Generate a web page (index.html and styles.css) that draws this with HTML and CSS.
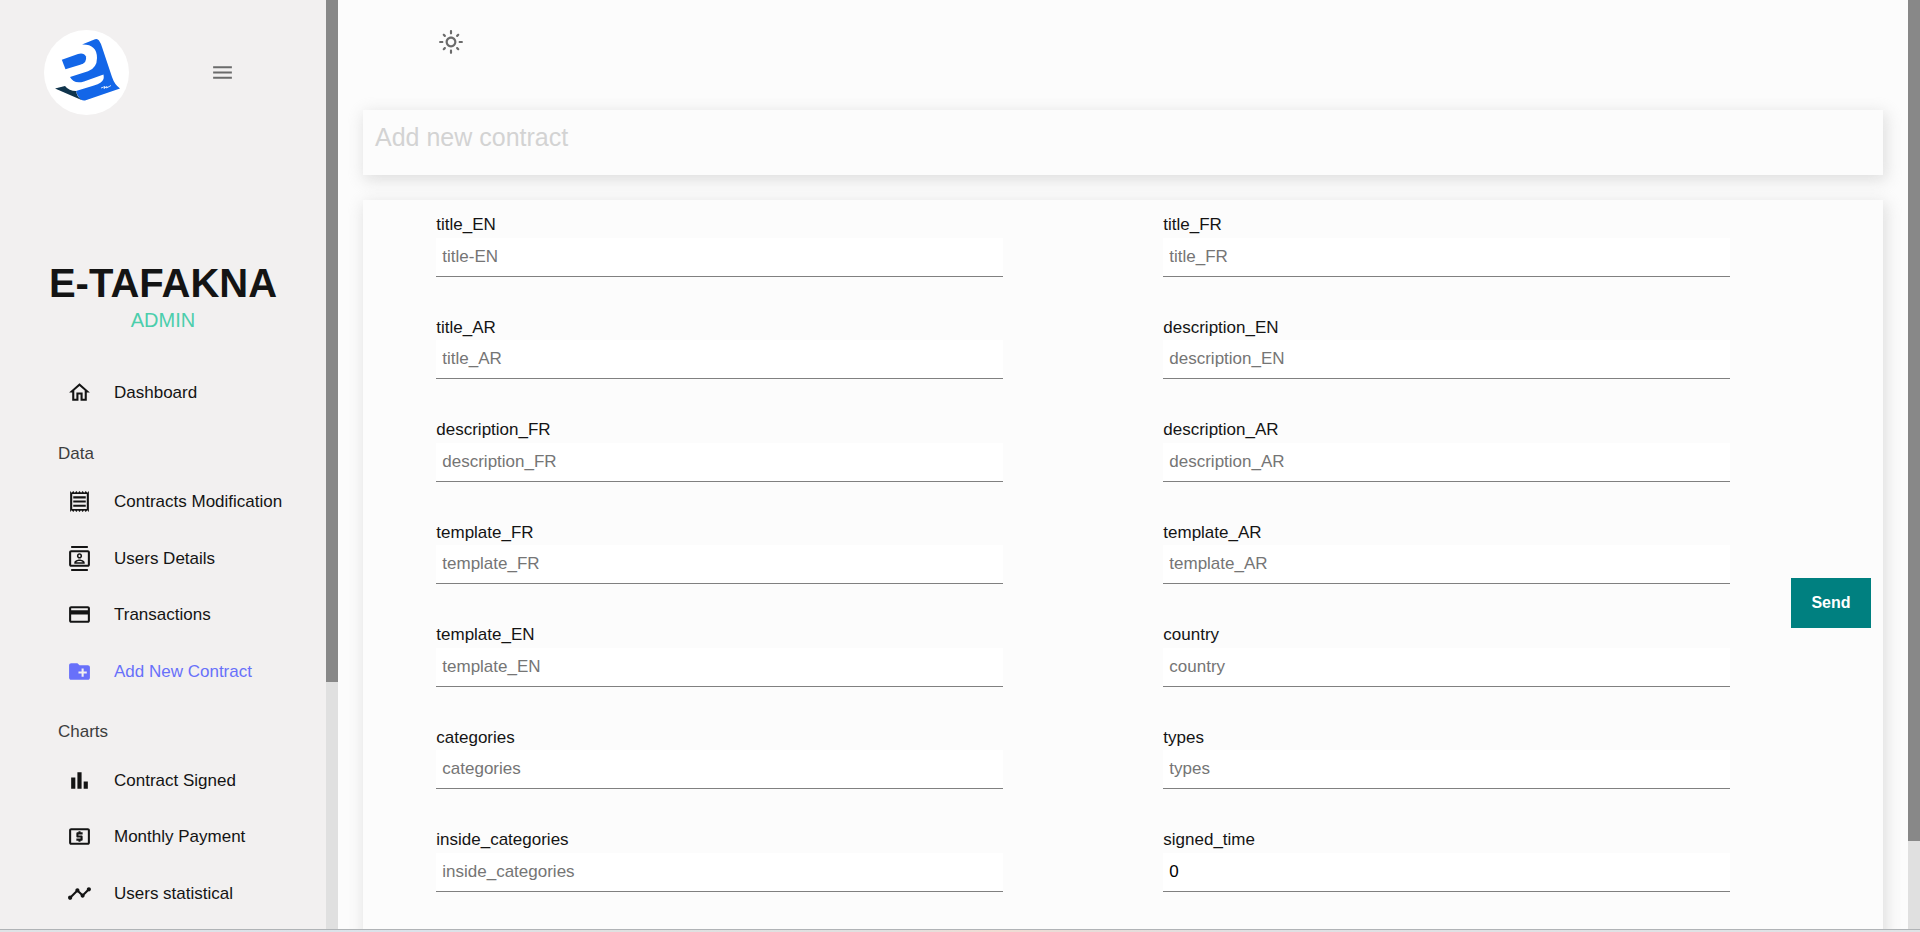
FILE: index.html
```html
<!DOCTYPE html>
<html lang="en">
<head>
<meta charset="utf-8">
<title>E-Tafakna Admin</title>
<link rel="stylesheet" href="styles.css">
</head>
<body>
<div class="app">
  <aside class="sidebar">
    <div class="brand-row">
      <svg class="logo" viewBox="0 0 85 85" role="img" aria-label="E-Tafakna logo">
        <circle cx="42.5" cy="42.5" r="42.5" fill="#fff"/>
        <path fill="#1366e8" d="M38 14.500L51 9.200Q53.500 8.200 55 10.500Q57 13.500 58 17L68 47Q70.500 54.500 76 58.500L41 70.500Q37 71 35 67.500Q32.500 64 32 61L50 55.500Q58 53 59.500 49Q60 47 59.500 44.500L40 51.500Q30 54.500 26 47L44 41.300Q53 38 53 28Q53 14 38 14.500Z"/>
        <path fill="#1366e8" d="M17.800 29.800L34 24Q40 22.500 42 26.500Q43 32.500 37 34.500L21.500 39.200Z"/>
        <path fill="#10344c" d="M11 58.500L21 56Q25 61 32 61Q32.500 66 37.500 70Z"/>
        <path fill="none" stroke="#fff" stroke-width="0.800" d="M57 58L61 56.500L60 58.500L63 56.500L62.500 58L67 55.500"/>
      </svg>
      <button class="icon-button" type="button" aria-label="Toggle menu">
        <svg class="icon" viewBox="0 0 24 24"><path d="M3 18h18v-2H3v2zm0-5h18v-2H3v2zm0-7v2h18V6H3z"/></svg>
      </button>
    </div>
    <h1 class="brand">E-TAFAKNA</h1>
    <p class="role">ADMIN</p>
    <nav class="nav">
      <a class="nav-item" href="#"><svg class="icon" viewBox="0 0 24 24"><path d="m12 5.690 5 4.500V18h-2v-6H9v6H7v-7.810l5-4.500M12 3 2 12h3v8h6v-6h2v6h6v-8h3L12 3z"/></svg>Dashboard</a>
      <h2 class="nav-heading">Data</h2>
      <a class="nav-item" href="#"><svg class="icon" viewBox="0 0 24 24"><path d="M19.500 3.500 18 2l-1.500 1.500L15 2l-1.500 1.500L12 2l-1.500 1.500L9 2 7.500 3.500 6 2 4.500 3.500 3 2v20l1.500-1.500L6 22l1.500-1.500L9 22l1.500-1.500L12 22l1.500-1.500L15 22l1.500-1.500L18 22l1.500-1.500L21 22V2l-1.500 1.500zM19 19.090H5V4.910h14v14.180zM6 15h12v2H6zm0-4h12v2H6zm0-4h12v2H6z"/></svg>Contracts Modification</a>
      <a class="nav-item" href="#"><svg class="icon" viewBox="0 0 24 24"><path d="M20 4H4c-1.100 0-2 .9-2 2v12c0 1.100.9 2 2 2h16c1.100 0 2-.9 2-2V6c0-1.100-.9-2-2-2zm0 14H4V6h16v12zM4 0h16v2H4zm0 22h16v2H4zm8-10c1.380 0 2.500-1.120 2.500-2.500S13.380 7 12 7 9.500 8.120 9.500 9.500 10.620 12 12 12zm0-3.500c.55 0 1 .45 1 1s-.45 1-1 1-1-.45-1-1 .45-1 1-1zm5 7.490C17 13.900 13.690 13 12 13s-5 .9-5 2.990V17h10v-1.010zm-8.190-.49c.61-.52 2.030-1 3.190-1 1.170 0 2.590.48 3.200 1H8.810z"/></svg>Users Details</a>
      <a class="nav-item" href="#"><svg class="icon" viewBox="0 0 24 24"><path d="M20 4H4c-1.110 0-1.990.89-1.990 2L2 18c0 1.110.89 2 2 2h16c1.110 0 2-.89 2-2V6c0-1.110-.89-2-2-2zm0 14H4v-6h16v6zm0-10H4V6h16v2z"/></svg>Transactions</a>
      <a class="nav-item nav-item-active" href="#" aria-current="page"><svg class="icon" viewBox="0 0 24 24"><path d="M20 6h-8l-2-2H4c-1.110 0-1.990.89-1.990 2L2 18c0 1.110.89 2 2 2h16c1.110 0 2-.89 2-2V8c0-1.110-.89-2-2-2zm-1 8h-3v3h-2v-3h-3v-2h3V9h2v3h3v2z"/></svg>Add New Contract</a>
      <h2 class="nav-heading">Charts</h2>
      <a class="nav-item" href="#"><svg class="icon" viewBox="0 0 24 24"><path d="M4 9h4v11H4zm12 4h4v7h-4zm-6-9h4v16h-4z"/></svg>Contract Signed</a>
      <a class="nav-item" href="#"><svg class="icon" viewBox="0 0 24 24"><path d="M11 17h2v-1h1c.55 0 1-.45 1-1v-3c0-.55-.45-1-1-1h-3v-1h4V8h-2V7h-2v1h-1c-.55 0-1 .45-1 1v3c0 .55.45 1 1 1h3v1H9v2h2v1zm9-13H4c-1.110 0-1.990.89-1.990 2L2 18c0 1.110.89 2 2 2h16c1.110 0 2-.89 2-2V6c0-1.110-.89-2-2-2zm0 14H4V6h16v12z"/></svg>Monthly Payment</a>
      <a class="nav-item" href="#"><svg class="icon" viewBox="0 0 24 24"><path d="M23 8c0 1.100-.9 2-2 2-.18 0-.35-.02-.51-.07l-3.560 3.550c.05.16.07.34.07.52 0 1.100-.9 2-2 2s-2-.9-2-2c0-.18.02-.36.07-.52l-2.550-2.550c-.16.05-.34.07-.52.07s-.36-.02-.52-.07l-4.550 4.560c.05.16.07.33.07.51 0 1.100-.9 2-2 2s-2-.9-2-2 .9-2 2-2c.18 0 .35.02.51.07l4.560-4.550C8.020 9.360 8 9.180 8 9c0-1.100.9-2 2-2s2 .9 2 2c0 .18-.02.36-.07.52l2.550 2.550c.16-.05.34-.07.52-.07s.36.02.52.07l3.550-3.560C19.020 8.350 19 8.180 19 8c0-1.100.9-2 2-2s2 .9 2 2z"/></svg>Users statistical</a>
    </nav>
  </aside>
  <div class="scrollbar" aria-hidden="true"><div class="thumb thumb-side"></div></div>
  <main class="main">
    <header class="topbar">
      <button class="icon-button" type="button" aria-label="Toggle colour mode">
        <svg class="icon icon-sun" viewBox="0 0 24 24"><path d="M12 9c1.650 0 3 1.350 3 3s-1.350 3-3 3-3-1.350-3-3 1.350-3 3-3m0-2c-2.760 0-5 2.240-5 5s2.240 5 5 5 5-2.240 5-5-2.240-5-5-5zM2 13h2c.55 0 1-.45 1-1s-.45-1-1-1H2c-.55 0-1 .45-1 1s.45 1 1 1zm18 0h2c.55 0 1-.45 1-1s-.45-1-1-1h-2c-.55 0-1 .45-1 1s.45 1 1 1zM11 2v2c0 .55.45 1 1 1s1-.45 1-1V2c0-.55-.45-1-1-1s-1 .45-1 1zm0 18v2c0 .55.45 1 1 1s1-.45 1-1v-2c0-.55-.45-1-1-1s-1 .45-1 1zM5.990 4.580c-.39-.39-1.030-.39-1.410 0-.39.39-.39 1.030 0 1.410l1.060 1.060c.39.39 1.030.39 1.410 0s.39-1.030 0-1.410L5.990 4.580zm12.370 12.370c-.39-.39-1.030-.39-1.410 0-.39.39-.39 1.030 0 1.410l1.060 1.060c.39.39 1.030.39 1.410 0 .39-.39.39-1.030 0-1.410l-1.060-1.060zm1.060-10.960c.39-.39.39-1.030 0-1.410-.39-.39-1.030-.39-1.410 0l-1.060 1.060c-.39.39-.39 1.030 0 1.410s1.030.39 1.410 0l1.060-1.060zM7.050 18.360c.39-.39.39-1.030 0-1.410-.39-.39-1.030-.39-1.410 0l-1.060 1.060c-.39.39-.39 1.030 0 1.410s1.030.39 1.410 0l1.060-1.060z"/></svg>
      </button>
    </header>
    <h2 class="card title-card">Add new contract</h2>
    <form class="card form-card">
      <div class="fields">
        <div class="field"><label for="title-en">title_EN</label><input id="title-en" type="text" placeholder="title-EN"></div>
        <div class="field"><label for="title-fr">title_FR</label><input id="title-fr" type="text" placeholder="title_FR"></div>
        <div class="field"><label for="title-ar">title_AR</label><input id="title-ar" type="text" placeholder="title_AR"></div>
        <div class="field"><label for="description-en">description_EN</label><input id="description-en" type="text" placeholder="description_EN"></div>
        <div class="field"><label for="description-fr">description_FR</label><input id="description-fr" type="text" placeholder="description_FR"></div>
        <div class="field"><label for="description-ar">description_AR</label><input id="description-ar" type="text" placeholder="description_AR"></div>
        <div class="field"><label for="template-fr">template_FR</label><input id="template-fr" type="text" placeholder="template_FR"></div>
        <div class="field"><label for="template-ar">template_AR</label><input id="template-ar" type="text" placeholder="template_AR"></div>
        <div class="field"><label for="template-en">template_EN</label><input id="template-en" type="text" placeholder="template_EN"></div>
        <div class="field"><label for="country">country</label><input id="country" type="text" placeholder="country"></div>
        <div class="field"><label for="categories">categories</label><input id="categories" type="text" placeholder="categories"></div>
        <div class="field"><label for="types">types</label><input id="types" type="text" placeholder="types"></div>
        <div class="field"><label for="inside-categories">inside_categories</label><input id="inside-categories" type="text" placeholder="inside_categories"></div>
        <div class="field"><label for="signed-time">signed_time</label><input id="signed-time" type="text" value="0"></div>
      </div>
      <button class="send" type="submit">Send</button>
    </form>
  </main>
  <div class="scrollbar" aria-hidden="true"><div class="thumb thumb-main"></div></div>
</div>
<div class="bottom-edge" aria-hidden="true"></div>
</body>
</html>
```
FILE: styles.css
```css
* {
  box-sizing: border-box;
}

body {
  margin: 0;
  height: 100vh;
  display: flex;
  flex-direction: column;
  overflow: hidden;
  background: #fcfcfc;
  color: #141414;
  font-family: "Liberation Sans", Arial, sans-serif;
  font-size: 17px;
  line-height: 1.5;
}

.app {
  flex: 1;
  min-height: 0;
  display: grid;
  grid-template-columns: 326px 12px minmax(0, 1fr) 12px;
  grid-template-rows: minmax(0, 1fr);
}

.sidebar {
  overflow: hidden;
  background: #f2f0f0;
}

.brand-row {
  display: flex;
  align-items: center;
  gap: 81px;
  padding: 30px 44px 0;
  margin-bottom: 144px;
}

.logo {
  width: 85px;
  height: 85px;
}

.icon {
  display: block;
  flex: none;
  width: 25px;
  height: 25px;
  fill: currentColor;
}

.icon-sun {
  width: 26px;
  height: 26px;
}

.icon-button {
  display: block;
  padding: 0;
  border: 0;
  background: none;
  color: #6b6b6b;
  cursor: pointer;
}

.brand,
.role {
  margin: 0;
  text-align: center;
}

.brand {
  font-size: 40px;
  line-height: 48px;
}

.role {
  color: #4cceac;
  font-size: 20px;
  line-height: 26px;
}

.nav {
  padding: 32px 0 0 58px;
}

.nav-item {
  display: flex;
  align-items: center;
  gap: 22px;
  padding: 15px 0 16px 9px;
  color: #141414;
  text-decoration: none;
  white-space: nowrap;
}

.nav-item-active {
  color: #6870fa;
}

.nav-heading {
  margin: 19px 0 8px;
  color: #3d3d3d;
  font-size: 17px;
  font-weight: 400;
}

.scrollbar {
  background: #e0e0e0;
}

.thumb {
  background: #888;
}

.thumb-side {
  height: 73.4%;
}

.thumb-main {
  height: 90.5%;
}

.main {
  overflow: hidden;
  padding: 0 25px;
}

.topbar {
  height: 110px;
  padding: 29px 75px;
}

.card {
  background: #fcfcfc;
  box-shadow: 2px 4px 15px 1px rgba(190, 190, 190, 0.47);
}

.title-card {
  margin: 0 0 25px;
  padding: 12px 12px 23px;
  color: #d3d3d3;
  font-size: 25px;
  font-weight: 400;
  line-height: 30px;
}

.form-card {
  display: flex;
  align-items: center;
  padding: 12px;
}

.fields {
  flex: 1;
  display: flex;
  flex-wrap: wrap;
  justify-content: space-around;
  gap: 38px;
  padding-bottom: 102px;
}

.field {
  width: 40%;
}

.field label {
  display: block;
}

.field input {
  display: block;
  width: 100%;
  height: 39px;
  padding: 0 6px;
  border: 0;
  border-bottom: 1px solid #808080;
  border-radius: 0;
  background: #fff;
  color: #000;
  font: inherit;
}

.field input::placeholder {
  color: #757575;
}

.send {
  width: 80px;
  height: 50px;
  padding: 0;
  border: 0;
  background: #008080;
  color: #fff;
  font-family: inherit;
  font-size: 16px;
  font-weight: 700;
  cursor: pointer;
}

.bottom-edge {
  flex: none;
  height: 3px;
  border-top: 1px solid #b0b3b6;
  background: linear-gradient(90deg, #dfe3e6 0%, #dbe2ea 22%, #dfe1e1 30%, #e0e0e0 46%, #f0dcd3 52%, #e8dcd8 56%, #dfe0e3 66%, #dfe3e6 100%);
}
```
